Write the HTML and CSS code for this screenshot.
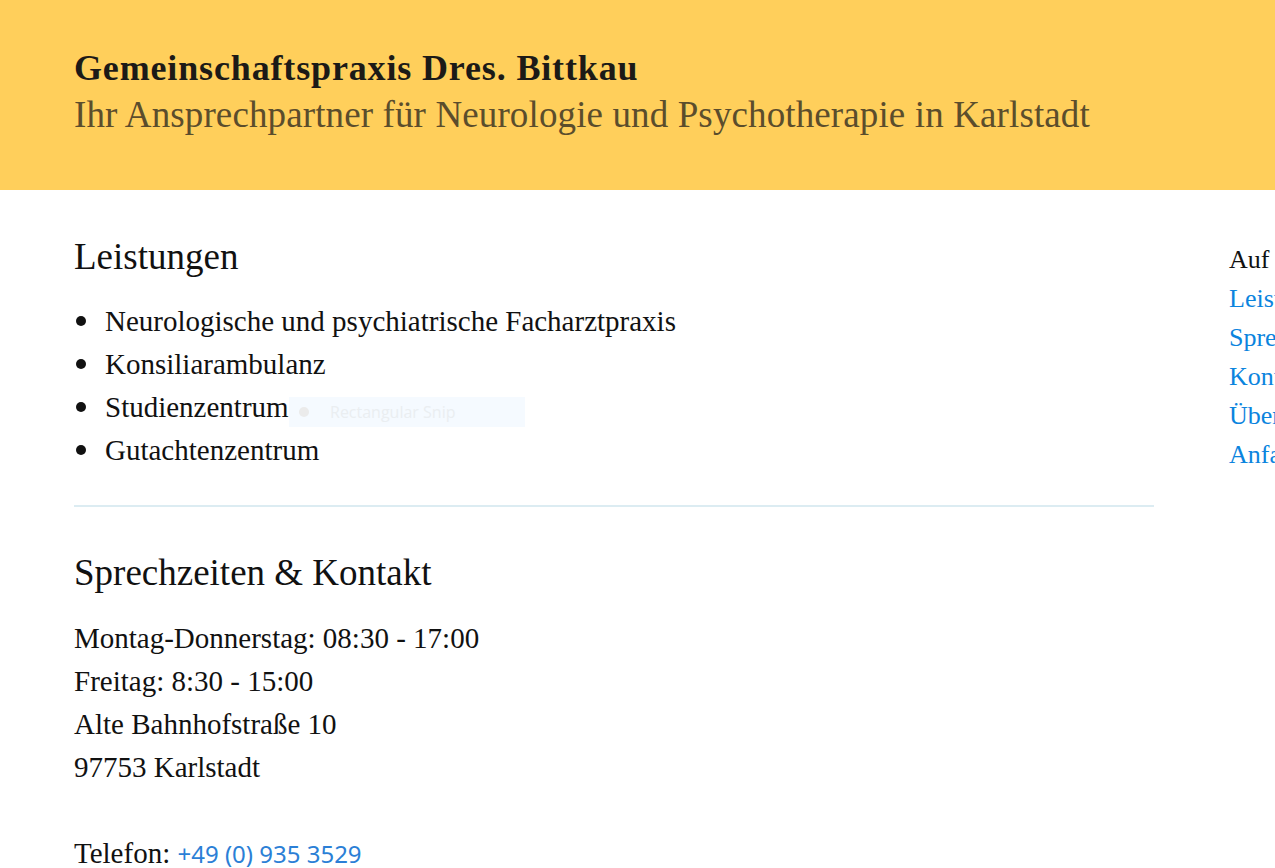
FILE: index.html
```html
<!DOCTYPE html>
<html lang="de">
<head>
<meta charset="utf-8">
<title>Gemeinschaftspraxis Dres. Bittkau</title>
<link rel="stylesheet" href="styles.css">
</head>
<body>
<header class="site-header">
  <h1 class="site-title">Gemeinschaftspraxis Dres. Bittkau</h1>
  <p class="site-tagline">Ihr Ansprechpartner für Neurologie und Psychotherapie in Karlstadt</p>
</header>
<div class="page">
  <main class="content">
    <section class="section">
      <h2 class="section-title">Leistungen</h2>
      <ul class="services">
        <li>Neurologische und psychiatrische Facharztpraxis</li>
        <li>Konsiliarambulanz</li>
        <li>Studienzentrum<span class="snip"><span class="snip-dot"></span>Rectangular Snip</span></li>
        <li>Gutachtenzentrum</li>
      </ul>
    </section>
    <hr class="divider">
    <section class="section">
      <h2 class="section-title section-title-second">Sprechzeiten &amp; Kontakt</h2>
      <p class="contact">Montag-Donnerstag: 08:30 - 17:00<br>Freitag: 8:30 - 15:00<br>Alte Bahnhofstraße 10<br>97753 Karlstadt<br><br>Telefon: <a class="phone" href="#">+49 (0) 935 3529</a></p>
    </section>
  </main>
  <aside class="sidebar">
    <p class="sidebar-title">Auf dieser Seite</p>
    <ul class="toc">
      <li><a href="#">Leistungen</a></li>
      <li><a href="#">Sprechzeiten</a></li>
      <li><a href="#">Kontakt</a></li>
      <li><a href="#">Über uns</a></li>
      <li><a href="#">Anfahrt</a></li>
    </ul>
  </aside>
</div>
</body>
</html>
```
FILE: styles.css
```css
html {
  scrollbar-width: none;
  overflow-x: hidden;
}
body {
  margin: 0;
  font-family: "Liberation Serif", "DejaVu Serif", serif;
  color: #111;
  background: #fff;
  overflow-x: hidden;
}
.site-header {
  background: #ffcf5b;
  height: 190px;
  box-sizing: border-box;
  padding: 48px 74px 0;
}
.site-title {
  margin: 0;
  font-size: 36px;
  letter-spacing: 0.85px;
  font-weight: bold;
  line-height: 40px;
  color: #1c1a17;
}
.site-tagline {
  margin: 4px 0 0;
  font-size: 37px;
  letter-spacing: 0.12px;
  line-height: 46px;
  color: #5b4d2c;
}
.page {
  display: flex;
  gap: 75px;
  padding: 0 0 0 74px;
  width: 1400px;
}
.content {
  width: 1080px;
  flex: none;
}
.section-title {
  margin: 47px 0 0;
  font-weight: normal;
  font-size: 37px;
  line-height: 40px;
}
.section-title-second {
  margin-top: 46px;
}
.services {
  list-style: none;
  margin: 23px 0 0;
  padding: 0 0 0 31px;
  font-size: 29px;
  line-height: 43px;
}
.services li {
  position: relative;
}
.services li::before {
  content: "";
  position: absolute;
  left: -29px;
  top: 16px;
  width: 10px;
  height: 10px;
  border-radius: 50%;
  background: #111;
}
.snip {
  position: absolute;
  left: 184px;
  top: 11px;
  width: 236px;
  height: 30px;
  background: #f5faff;
  font-family: "Open Sans", "Liberation Sans", sans-serif;
  font-size: 16px;
  line-height: 30px;
  color: #eaeef1;
  box-sizing: border-box;
  padding-left: 41px;
}
.snip-dot {
  position: absolute;
  left: 10px;
  top: 10px;
  width: 10px;
  height: 10px;
  border-radius: 50%;
  background: #ebebeb;
}
.divider {
  margin: 33px 0 0;
  border: 0;
  border-top: 2px solid #dcecf2;
}
.contact {
  margin: 24px 0 0;
  font-size: 29px;
  line-height: 43px;
}
.phone {
  color: #2b7fd6;
  text-decoration: none;
  font-family: "Noto Sans", "Liberation Sans", sans-serif;
  font-size: 24px;
}
.sidebar {
  flex: none;
  width: 300px;
  padding-top: 50px;
  font-size: 26px;
}
.sidebar-title {
  margin: 0;
  line-height: 39px;
}
.toc {
  list-style: none;
  margin: 0;
  padding: 0;
  line-height: 39px;
}
.toc a {
  color: #0b84de;
  text-decoration: none;
}
```
